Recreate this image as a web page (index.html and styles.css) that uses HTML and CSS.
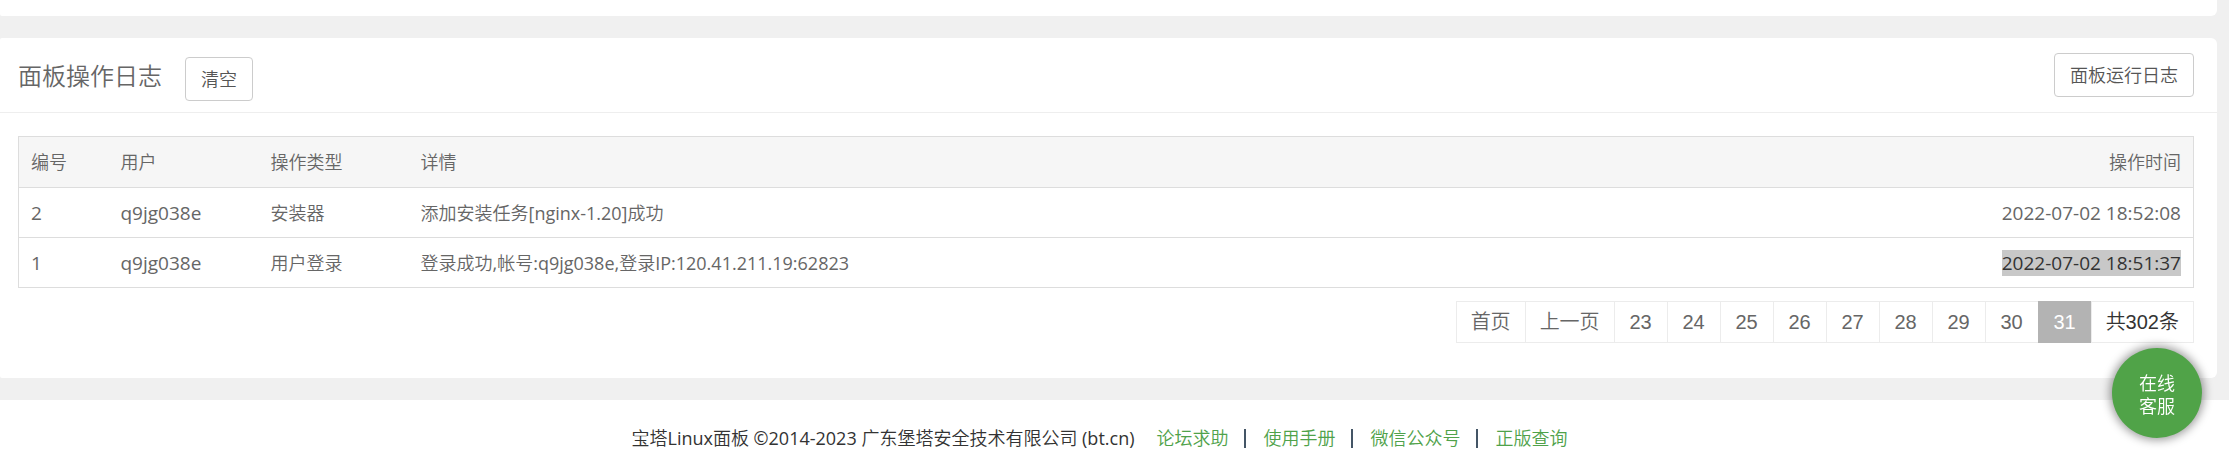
FILE: index.html
```html
<!DOCTYPE html>
<html lang="zh-CN">
<head>
<meta charset="utf-8">
<title>面板操作日志</title>
<link rel="stylesheet" href="styles.css">
</head>
<body>
<main class="main">
  <section class="card card-previous"></section>
  <section class="card">
    <header class="card-header">
      <h1 class="title">面板操作日志</h1>
      <button class="btn btn-clear" type="button">清空</button>
      <button class="btn btn-run-log" type="button">面板运行日志</button>
    </header>
    <div class="card-body">
      <table class="log-table">
        <colgroup>
          <col class="col-id"><col class="col-user"><col class="col-type"><col><col class="col-time">
        </colgroup>
        <thead>
          <tr><th>编号</th><th>用户</th><th>操作类型</th><th>详情</th><th class="time">操作时间</th></tr>
        </thead>
        <tbody>
          <tr><td class="latin">2</td><td class="latin">q9jg038e</td><td>安装器</td><td>添加安装任务[nginx-1.20]成功</td><td class="time latin">2022-07-02 18:52:08</td></tr>
          <tr><td class="latin">1</td><td class="latin">q9jg038e</td><td>用户登录</td><td>登录成功,帐号:q9jg038e,登录IP:120.41.211.19:62823</td><td class="time latin"><span class="selected">2022-07-02 18:51:37</span></td></tr>
        </tbody>
      </table>
      <nav class="pages" aria-label="分页">
        <a class="page" href="#">首页</a>
        <a class="page" href="#">上一页</a>
        <a class="page" href="#">23</a>
        <a class="page" href="#">24</a>
        <a class="page" href="#">25</a>
        <a class="page" href="#">26</a>
        <a class="page" href="#">27</a>
        <a class="page" href="#">28</a>
        <a class="page" href="#">29</a>
        <a class="page" href="#">30</a>
        <span class="page page-current" aria-current="page">31</span>
        <span class="page page-total">共302条</span>
      </nav>
    </div>
  </section>
</main>
<footer class="footer">
  <span class="copyright">宝塔Linux面板 ©2014-2023 广东堡塔安全技术有限公司 (bt.cn)</span>
  <a class="footer-link" href="#">论坛求助</a>
  <span class="bar"></span>
  <a class="footer-link" href="#">使用手册</a>
  <span class="bar"></span>
  <a class="footer-link" href="#">微信公众号</a>
  <span class="bar"></span>
  <a class="footer-link" href="#">正版查询</a>
</footer>
<button class="service" type="button">在线<br>客服</button>
</body>
</html>
```
FILE: styles.css
```css
* {
  box-sizing: border-box;
}

body {
  margin: 0;
  background: #fff;
  color: #666;
  font-family: "Open Sans", "Noto Sans CJK SC DemiLight", "Noto Sans CJK SC", sans-serif;
  font-size: 18px;
  font-weight: 400;
  line-height: 26px;
}

a {
  color: inherit;
  text-decoration: none;
}

.main {
  display: flex;
  flex-direction: column;
  gap: 22px;
  padding: 0 12px 22px 0;
  background: #f0f0f0;
}

.card {
  background: #fff;
  border-radius: 2px 6px 6px 2px;
}

.card-previous {
  height: 16px;
  border-radius: 0 0 6px 2px;
}

.card-header {
  display: flex;
  align-items: flex-start;
  padding: 15px 23px 11px 18px;
  border-bottom: 1px solid #eee;
}

.title {
  margin: 4px 23px 0 0;
  font-size: 24px;
  font-weight: 400;
  line-height: 38px;
}

.btn {
  height: 44px;
  padding: 0 15px;
  border: 1px solid #ccc;
  border-radius: 4px;
  background: #fff;
  color: #555;
  font: inherit;
}

.btn-clear {
  margin-top: 4px;
}

.btn-run-log {
  margin-left: auto;
}

.card-body {
  padding: 23px 23px 35px 18px;
}

.log-table {
  width: 100%;
  border: 1px solid #ddd;
  border-collapse: collapse;
  table-layout: fixed;
}

.col-id {
  width: 90px;
}

.col-user,
.col-type {
  width: 150px;
}

.col-time {
  width: 300px;
}

.log-table th,
.log-table td {
  height: 50px;
  padding: 0 12px;
  border-bottom: 1px solid #ddd;
  text-align: left;
  font-weight: 400;
}

.log-table th {
  height: 51px;
  background: #f6f6f6;
}

.log-table .time {
  text-align: right;
}

.log-table .latin {
  font-size: 19px;
}

.selected {
  display: inline-block;
  background: #c8c8c8;
  color: #333;
}

.pages {
  display: flex;
  justify-content: flex-end;
  margin-top: 13px;
  font-family: "Liberation Sans", "Noto Sans CJK SC DemiLight", "Noto Sans CJK SC", sans-serif;
  font-size: 20px;
  line-height: 40px;
}

.page {
  min-width: 53px;
  padding: 0 14px;
  border: 1px solid #ececec;
  border-right: 0;
  text-align: center;
}

.page-current {
  border-color: #b3b3b3;
  background: #b3b3b3;
  color: #fff;
}

.page-total {
  border-right: 1px solid #ececec;
  color: #333;
}

.footer {
  display: flex;
  align-items: center;
  justify-content: center;
  padding: 25px 30px 17px 0;
  color: #333;
}

.copyright {
  margin-right: 22px;
}

.footer-link {
  color: #4fa24a;
}

.bar {
  width: 2px;
  height: 19px;
  margin: 0 18px 0 15px;
  background: #456;
}

.service {
  position: fixed;
  right: 27px;
  bottom: 30px;
  width: 90px;
  height: 90px;
  padding: 4px 0 0;
  border: 0;
  border-radius: 50%;
  background: #50a348;
  box-shadow: 0 0 10px 2px rgba(0, 0, 0, 0.4);
  color: #fff;
  font: inherit;
  line-height: 23px;
}
```
